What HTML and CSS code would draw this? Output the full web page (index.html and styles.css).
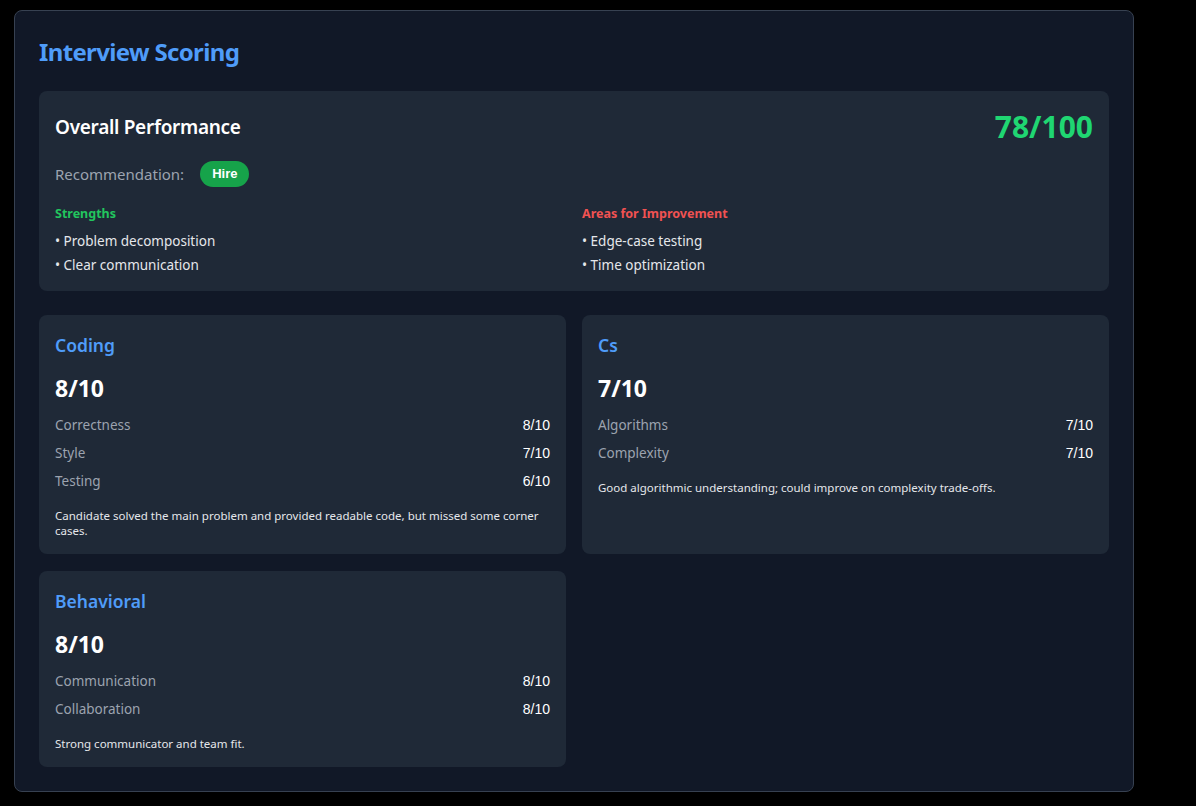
FILE: index.html
```html
<!DOCTYPE html>
<html>
<head>
<meta charset="utf-8">
<link rel="stylesheet" href="styles.css">
</head>
<body>
<div class="panel">
  <h1 class="title">Interview Scoring</h1>
  <section class="overall">
    <div class="overall-head">
      <h2 class="overall-title">Overall Performance</h2>
      <div class="overall-score">78/100</div>
    </div>
    <div class="rec">
      <span class="rec-label">Recommendation:</span>
      <span class="badge">Hire</span>
    </div>
    <div class="lists">
      <div class="list">
        <h3 class="list-head good">Strengths</h3>
        <ul>
          <li>• Problem decomposition</li>
          <li>• Clear communication</li>
        </ul>
      </div>
      <div class="list">
        <h3 class="list-head bad">Areas for Improvement</h3>
        <ul>
          <li>• Edge-case testing</li>
          <li>• Time optimization</li>
        </ul>
      </div>
    </div>
  </section>
  <div class="grid">
    <section class="cat">
      <h3 class="cat-title">Coding</h3>
      <div class="cat-score">8/10</div>
      <div class="row"><span class="lbl">Correctness</span><span class="val">8/10</span></div>
      <div class="row"><span class="lbl">Style</span><span class="val">7/10</span></div>
      <div class="row"><span class="lbl">Testing</span><span class="val">6/10</span></div>
      <p class="note">Candidate solved the main problem and provided readable code, but missed some corner cases.</p>
    </section>
    <section class="cat">
      <h3 class="cat-title">Cs</h3>
      <div class="cat-score">7/10</div>
      <div class="row"><span class="lbl">Algorithms</span><span class="val">7/10</span></div>
      <div class="row"><span class="lbl">Complexity</span><span class="val">7/10</span></div>
      <p class="note">Good algorithmic understanding; could improve on complexity trade-offs.</p>
    </section>
    <section class="cat">
      <h3 class="cat-title">Behavioral</h3>
      <div class="cat-score">8/10</div>
      <div class="row"><span class="lbl">Communication</span><span class="val">8/10</span></div>
      <div class="row"><span class="lbl">Collaboration</span><span class="val">8/10</span></div>
      <p class="note">Strong communicator and team fit.</p>
    </section>
  </div>
</div>
</body>
</html>
```
FILE: styles.css
```css
html, body {
  margin: 0;
  background: #000;
}
body {
  padding: 10px 14px;
  font-family: "Noto Sans", "Open Sans", sans-serif;
  color: #f3f4f6;
}
.panel {
  width: 1120px;
  box-sizing: border-box;
  background: #111827;
  border: 1px solid #374151;
  border-radius: 8px;
  padding: 25px 24px 24px;
}
.title {
  margin: 0 0 23px;
  font-size: 24px;
  line-height: 32px;
  font-weight: 700;
  color: #4f9cf9;
  letter-spacing: -0.65px;
}
.overall {
  background: #1f2937;
  border-radius: 8px;
  padding: 16px;
}
.overall-head {
  display: flex;
  justify-content: space-between;
  align-items: center;
  height: 38px;
}
.overall-title {
  margin: 0;
  font-size: 19px;
  font-weight: 600;
  color: #fff;
  letter-spacing: -0.3px;
  padding-top: 2px;
}
.overall-score {
  font-size: 30px;
  font-weight: 700;
  color: #1fd672;
  line-height: 36px;
  padding-top: 2px;
}
.rec {
  display: flex;
  align-items: center;
  gap: 16px;
  margin-top: 16px;
  height: 26px;
}
.rec-label {
  font-size: 15px;
  color: #9ca3af;
}
.badge {
  background: #16a34a;
  color: #fff;
  font-family: "Liberation Sans", Arial, sans-serif;
  font-weight: 700;
  font-size: 13px;
  line-height: 26px;
  padding: 0 12px;
  border-radius: 13px;
}
.lists {
  display: grid;
  grid-template-columns: 1fr 1fr;
  gap: 16px;
  margin-top: 18px;
}
.list-head {
  margin: 0 0 8px;
  font-size: 12.5px;
  line-height: 18px;
  font-weight: 700;
}
.good { color: #22c55e; }
.bad { color: #f05252; }
ul {
  list-style: none;
  margin: 0;
  padding: 0;
}
li {
  font-size: 13.5px;
  line-height: 20px;
  margin-bottom: 4px;
  color: #e5e7eb;
}
li:last-child { margin-bottom: 0; }
.grid {
  display: grid;
  grid-template-columns: 1fr 1fr;
  gap: 17px 16px;
  margin-top: 24px;
}
.cat {
  background: #1f2937;
  border-radius: 8px;
  padding: 16px;
}
.cat-title {
  margin: 0 0 13px;
  font-size: 17.5px;
  line-height: 28px;
  font-weight: 600;
  color: #4f9cf9;
}
.cat-score {
  font-size: 23px;
  line-height: 32px;
  font-weight: 700;
  color: #fff;
  margin-bottom: 11px;
}
.row {
  display: flex;
  justify-content: space-between;
  line-height: 20px;
  margin-bottom: 8px;
  font-size: 13.5px;
}
.lbl { color: #9ca3af; }
.val { color: #fff; font-family: "Liberation Sans", Arial, sans-serif; font-size: 14px; }
.note {
  margin: 17px 0 0;
  font-size: 11.5px;
  line-height: 15px;
  color: #e5e7eb;
}
```
